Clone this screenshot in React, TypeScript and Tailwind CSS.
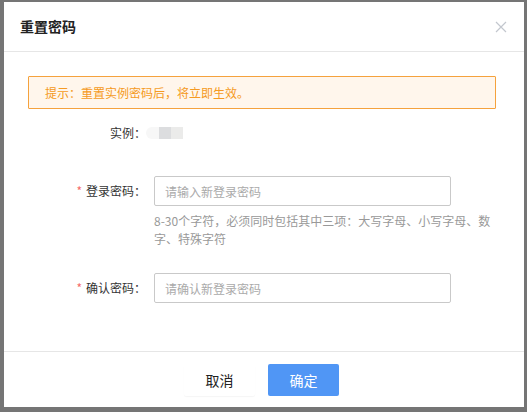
import { useState } from 'react';

function CloseIcon() {
  return (
    <svg width="12" height="12" viewBox="0 0 12 12" fill="none" stroke="#c3c7ce" strokeWidth="1.2">
      <path d="M1 1 L11 11 M11 1 L1 11" />
    </svg>
  );
}

function FieldLabel({ text, required }: { text: string; required?: boolean }) {
  return (
    <div className="w-[142px] shrink-0 h-[30px] leading-[30px] text-right text-[12px] text-[#333]">
      {required && <span className="text-[#f56c6c] mr-[4px]">*</span>}
      {text}
    </div>
  );
}

export default function App() {
  const [pwd, setPwd] = useState('');
  const [confirm, setConfirm] = useState('');

  return (
    <div
      className="w-[527px] h-[412px] bg-[#757575] pt-[2px] pl-[4px] overflow-hidden"
      style={{ fontFamily: '"Noto Sans CJK SC", "Noto Sans", sans-serif' }}
    >
      <div className="w-[520px] h-[405px] bg-white flex flex-col">
        {/* header */}
        <div className="h-[50px] shrink-0 border-b border-[#e6e6e6] flex items-center justify-between pl-[16px] pr-[17px]">
          <h3 className="text-[14px] font-bold text-[#222]">重置密码</h3>
          <button className="p-0 mt-[1px]">
            <CloseIcon />
          </button>
        </div>

        {/* body */}
        <div className="flex-1 pt-[24px]">
          <div className="ml-[24px] w-[468px] h-[33px] border border-[#f5a23d] bg-[#fff6ec] rounded-[1px] flex items-center pl-[16px] text-[12px] text-[#f59a23]">
            提示：重置实例密码后，将立即生效。
          </div>

          <div className="mt-[14px] flex items-center h-[20px]">
            <div className="w-[142px] text-right text-[12px] text-[#333]">实例：</div>
            <div className="flex h-[12px]">
              <span className="w-[13px] bg-[#f7f7f7] rounded-l-full" />
              <span className="w-[12px] bg-[#dcdddf]" />
              <span className="w-[12px] bg-[#ebebea]" />
            </div>
          </div>

          <div className="mt-[33px] flex items-start">
            <FieldLabel text="登录密码：" required />
            <div className="ml-[8px]">
              <input
                type="password"
                value={pwd}
                onChange={(e) => setPwd(e.target.value)}
                placeholder="请输入新登录密码"
                className="w-[297px] h-[30px] border border-[#c9c9c9] rounded-[2px] px-[10px] text-[12px] text-[#333] placeholder:text-[#aaa] outline-none"
              />
              <p className="mt-[6px] w-[344px] text-[12px] leading-[18px] text-[#999]">
                8-30个字符，必须同时包括其中三项：大写字母、小写字母、数字、特殊字符
              </p>
            </div>
          </div>

          <div className="mt-[25px] flex items-start">
            <FieldLabel text="确认密码：" required />
            <div className="ml-[8px]">
              <input
                type="password"
                value={confirm}
                onChange={(e) => setConfirm(e.target.value)}
                placeholder="请确认新登录密码"
                className="w-[297px] h-[30px] border border-[#c9c9c9] rounded-[2px] px-[10px] text-[12px] text-[#333] placeholder:text-[#aaa] outline-none"
              />
            </div>
          </div>
        </div>

        {/* footer */}
        <div className="h-[56px] shrink-0 border-t border-[#e6e6e6] flex items-start pt-[12px] pl-[180px] gap-[13px]">
          <button className="w-[71px] h-[32px] bg-white text-[14px] text-[#222] shadow-[0_1px_1px_rgba(0,0,0,0.04)] rounded-[2px]">
            取消
          </button>
          <button className="w-[71px] h-[32px] bg-[#5096f5] text-[14px] text-white rounded-[2px]">
            确定
          </button>
        </div>
      </div>
    </div>
  );
}
